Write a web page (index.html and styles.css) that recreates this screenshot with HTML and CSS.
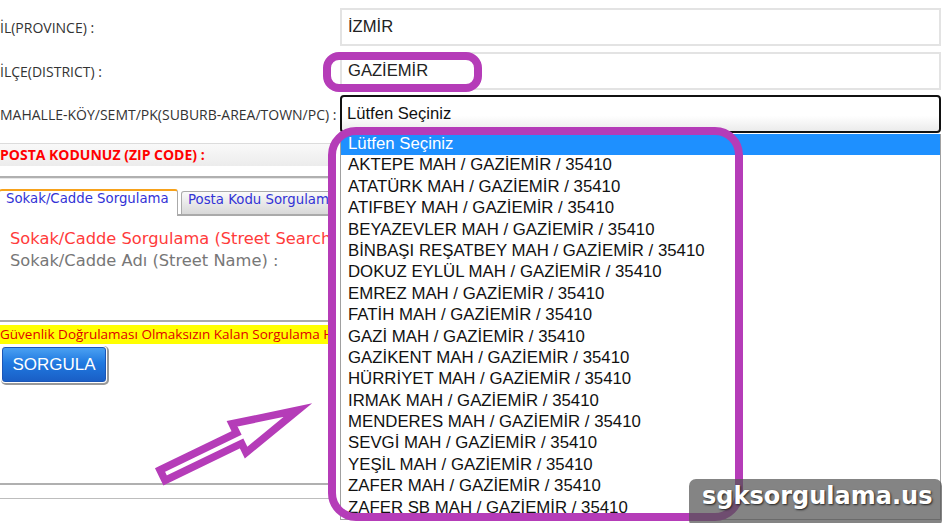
FILE: index.html
```html
<!DOCTYPE html>
<html lang="tr">
<head>
  <meta charset="UTF-8">
  <title>Posta Kodu Sorgulama</title>
  <link rel="stylesheet" href="styles.css">
</head>
<body>
  <div class="page">
    <div class="form-row">
      <span class="label">İL(PROVINCE) :</span>
      <div class="field">İZMİR</div>
    </div>
    <div class="form-row row-tight">
      <span class="label">İLÇE(DISTRICT) :</span>
      <div class="field">GAZİEMİR</div>
    </div>
    <div class="form-row">
      <span class="label">MAHALLE-KÖY/SEMT/PK(SUBURB-AREA/TOWN/PC) :</span>
      <div class="select-wrap">
        <div class="select">Lütfen Seçiniz</div>
        <ul class="dropdown">
          <li class="active">Lütfen Seçiniz</li>
          <li>AKTEPE MAH / GAZİEMİR / 35410</li>
          <li>ATATÜRK MAH / GAZİEMİR / 35410</li>
          <li>ATIFBEY MAH / GAZİEMİR / 35410</li>
          <li>BEYAZEVLER MAH / GAZİEMİR / 35410</li>
          <li>BİNBAŞI REŞATBEY MAH / GAZİEMİR / 35410</li>
          <li>DOKUZ EYLÜL MAH / GAZİEMİR / 35410</li>
          <li>EMREZ MAH / GAZİEMİR / 35410</li>
          <li>FATİH MAH / GAZİEMİR / 35410</li>
          <li>GAZİ MAH / GAZİEMİR / 35410</li>
          <li>GAZİKENT MAH / GAZİEMİR / 35410</li>
          <li>HÜRRİYET MAH / GAZİEMİR / 35410</li>
          <li>IRMAK MAH / GAZİEMİR / 35410</li>
          <li>MENDERES MAH / GAZİEMİR / 35410</li>
          <li>SEVGİ MAH / GAZİEMİR / 35410</li>
          <li>YEŞİL MAH / GAZİEMİR / 35410</li>
          <li>ZAFER MAH / GAZİEMİR / 35410</li>
          <li>ZAFER SB MAH / GAZİEMİR / 35410</li>
        </ul>
      </div>
    </div>

    <!-- listenin altinda kalan kisim -->
    <div class="lower">
      <div class="zip">POSTA KODUNUZ (ZIP CODE) :</div>
      <div class="rule"></div>

      <div class="tabs">
        <div class="tab tab-active">Sokak/Cadde Sorgulama</div>
        <div class="tab">Posta Kodu Sorgulama</div>
      </div>
      <div class="panel">
        <div class="panel-title">Sokak/Cadde Sorgulama (Street Search)</div>
        <div class="panel-label">Sokak/Cadde Adı (Street Name) :</div>
      </div>

      <div class="notice">Güvenlik Doğrulaması Olmaksızın Kalan Sorgulama Hakkınız</div>
      <button class="btn">SORGULA</button>

      <div class="footer-lines"></div>
    </div>

    <!-- isaretler -->
    <svg class="marks" width="945" height="523" viewBox="0 0 945 523">
      <rect x="327" y="56" width="151" height="32" rx="12" />
      <rect x="332" y="131" width="407" height="386" rx="24" />
      <polygon points="160,470 236.6,433 232.1,423.8 298,410 246.1,452.6 241.6,443.4 165.1,480.4" />
    </svg>

    <div class="watermark">sgksorgulama.us</div>
  </div>
</body>
</html>
```

FILE: styles.css
```css
body {
  margin: 0;
  background-color: #fff;
  font-family: 'Open Sans', sans-serif;
}

.page {
  position: relative;
  width: 945px;
  height: 523px;
  padding-top: 8px;
  box-sizing: border-box;
  overflow: hidden;
}

.form-row {
  display: grid;
  grid-template-columns: 340px 601px;
  align-items: center;
  margin-bottom: 6px;
}

.row-tight {
  margin-bottom: 5px;
}

.label {
  font-size: 14px;
  color: #333;
  white-space: nowrap;
}

.field {
  display: flex;
  align-items: center;
  height: 38px;
  box-sizing: border-box;
  padding-left: 6px;
  border: 2px solid #e3e3e3;
  font: 16.6px 'Liberation Sans', Arial, sans-serif;
  color: #222;
}

.select-wrap {
  position: relative;
}

.select {
  display: flex;
  align-items: center;
  height: 38px;
  box-sizing: border-box;
  padding-left: 5px;
  border: 2px solid #111;
  border-radius: 4px;
  background: linear-gradient(#fff 55%, #ebebeb);
  font: 16.6px 'Liberation Sans', Arial, sans-serif;
  color: #111;
}

.dropdown {
  position: absolute;
  top: calc(100% + 1px);
  left: 0;
  z-index: 2;
  width: 601px;
  height: 386px;
  box-sizing: border-box;
  margin: 0;
  padding: 0;
  list-style: none;
  background-color: #fff;
  border: 1px solid #a0a0a0;
  border-top: none;
  overflow: hidden;
}

.dropdown li {
  height: 21.4px;
  line-height: 22px;
  padding-left: 7px;
  font: 16.8px 'Liberation Sans', Arial, sans-serif;
  color: #111;
  white-space: nowrap;
}

.dropdown li.active {
  background-color: #1e90ff;
  color: #fff;
}

.lower {
  width: 336px;
  margin-top: 10px;
  overflow: hidden;
}

.zip {
  height: 22px;
  line-height: 22px;
  border-top: 1px solid #dcdcdc;
  background: linear-gradient(#f9f9f9, #ececec);
  color: #f00;
  font-size: 14px;
  font-weight: bold;
  white-space: nowrap;
}

.rule {
  margin-top: 10px;
  border-top: 2px solid #b0b0b0;
  border-bottom: 1px solid #e6e6e6;
}

.tabs {
  display: flex;
  align-items: flex-end;
  padding-top: 10px;
  border-bottom: 2px solid #aaa;
}

.tab {
  height: 22px;
  line-height: 22px;
  padding: 0 6px;
  margin-left: 3px;
  border: 1px solid #aaa;
  border-bottom: none;
  border-radius: 3px 3px 0 0;
  background: linear-gradient(#fafafa, #d8d8d8);
  font: 13.3px 'DejaVu Sans', Verdana, sans-serif;
  color: #3333d6;
  white-space: nowrap;
}

.tab-active {
  flex-shrink: 0;
  width: 165px;
  height: 23px;
  margin-left: -1px;
  margin-bottom: -2px;
  padding-bottom: 2px;
  border-top: 2px solid #f7a21b;
  background: #fff;
}

.panel {
  height: 106px;
  padding: 12px 10px 0;
  box-sizing: border-box;
  border-bottom: 2px solid #aaa;
  font: 16.3px 'DejaVu Sans', Verdana, sans-serif;
  white-space: nowrap;
}

.panel-title {
  color: #ff3b3b;
  line-height: 22px;
}

.panel-label {
  color: #777;
  line-height: 22px;
}

.notice {
  margin-top: 3px;
  height: 19px;
  line-height: 19px;
  background-color: #ffff00;
  color: #e00000;
  font-size: 13.5px;
  white-space: nowrap;
}

.btn {
  display: block;
  width: 104px;
  height: 35px;
  margin: 3px 0 0 2px;
  border: 1px solid #1a56b8;
  border-radius: 3px;
  background: linear-gradient(#4aa0f2, #2079e0 45%, #1a5fc6);
  box-shadow: 0 0 0 1px #fff, 1px 1px 0 2px #999;
  color: #fff;
  font: 17px 'Liberation Sans', Arial, sans-serif;
}

.footer-lines {
  margin-top: 101px;
  height: 13px;
  border-top: 2px solid #b0b0b0;
  border-bottom: 1px solid #bdbdbd;
}

.marks {
  position: absolute;
  top: 0;
  left: 0;
  z-index: 3;
  pointer-events: none;
}

.marks rect,
.marks polygon {
  fill: none;
  stroke: #b53cb8;
  stroke-width: 8;
}

.marks polygon {
  fill: #fff;
  stroke-width: 7.5;
  stroke-miterlimit: 10;
}

.watermark {
  position: absolute;
  left: 689px;
  top: 479px;
  z-index: 4;
  width: 253px;
  height: 48px;
  padding: 3px 0 0 13px;
  box-sizing: border-box;
  border-radius: 7px;
  background-color: rgba(85, 85, 85, 0.72);
  color: #fff;
  font: bold 24px 'DejaVu Sans', sans-serif;
  text-shadow: 1px 1px 2px #222;
}
```
